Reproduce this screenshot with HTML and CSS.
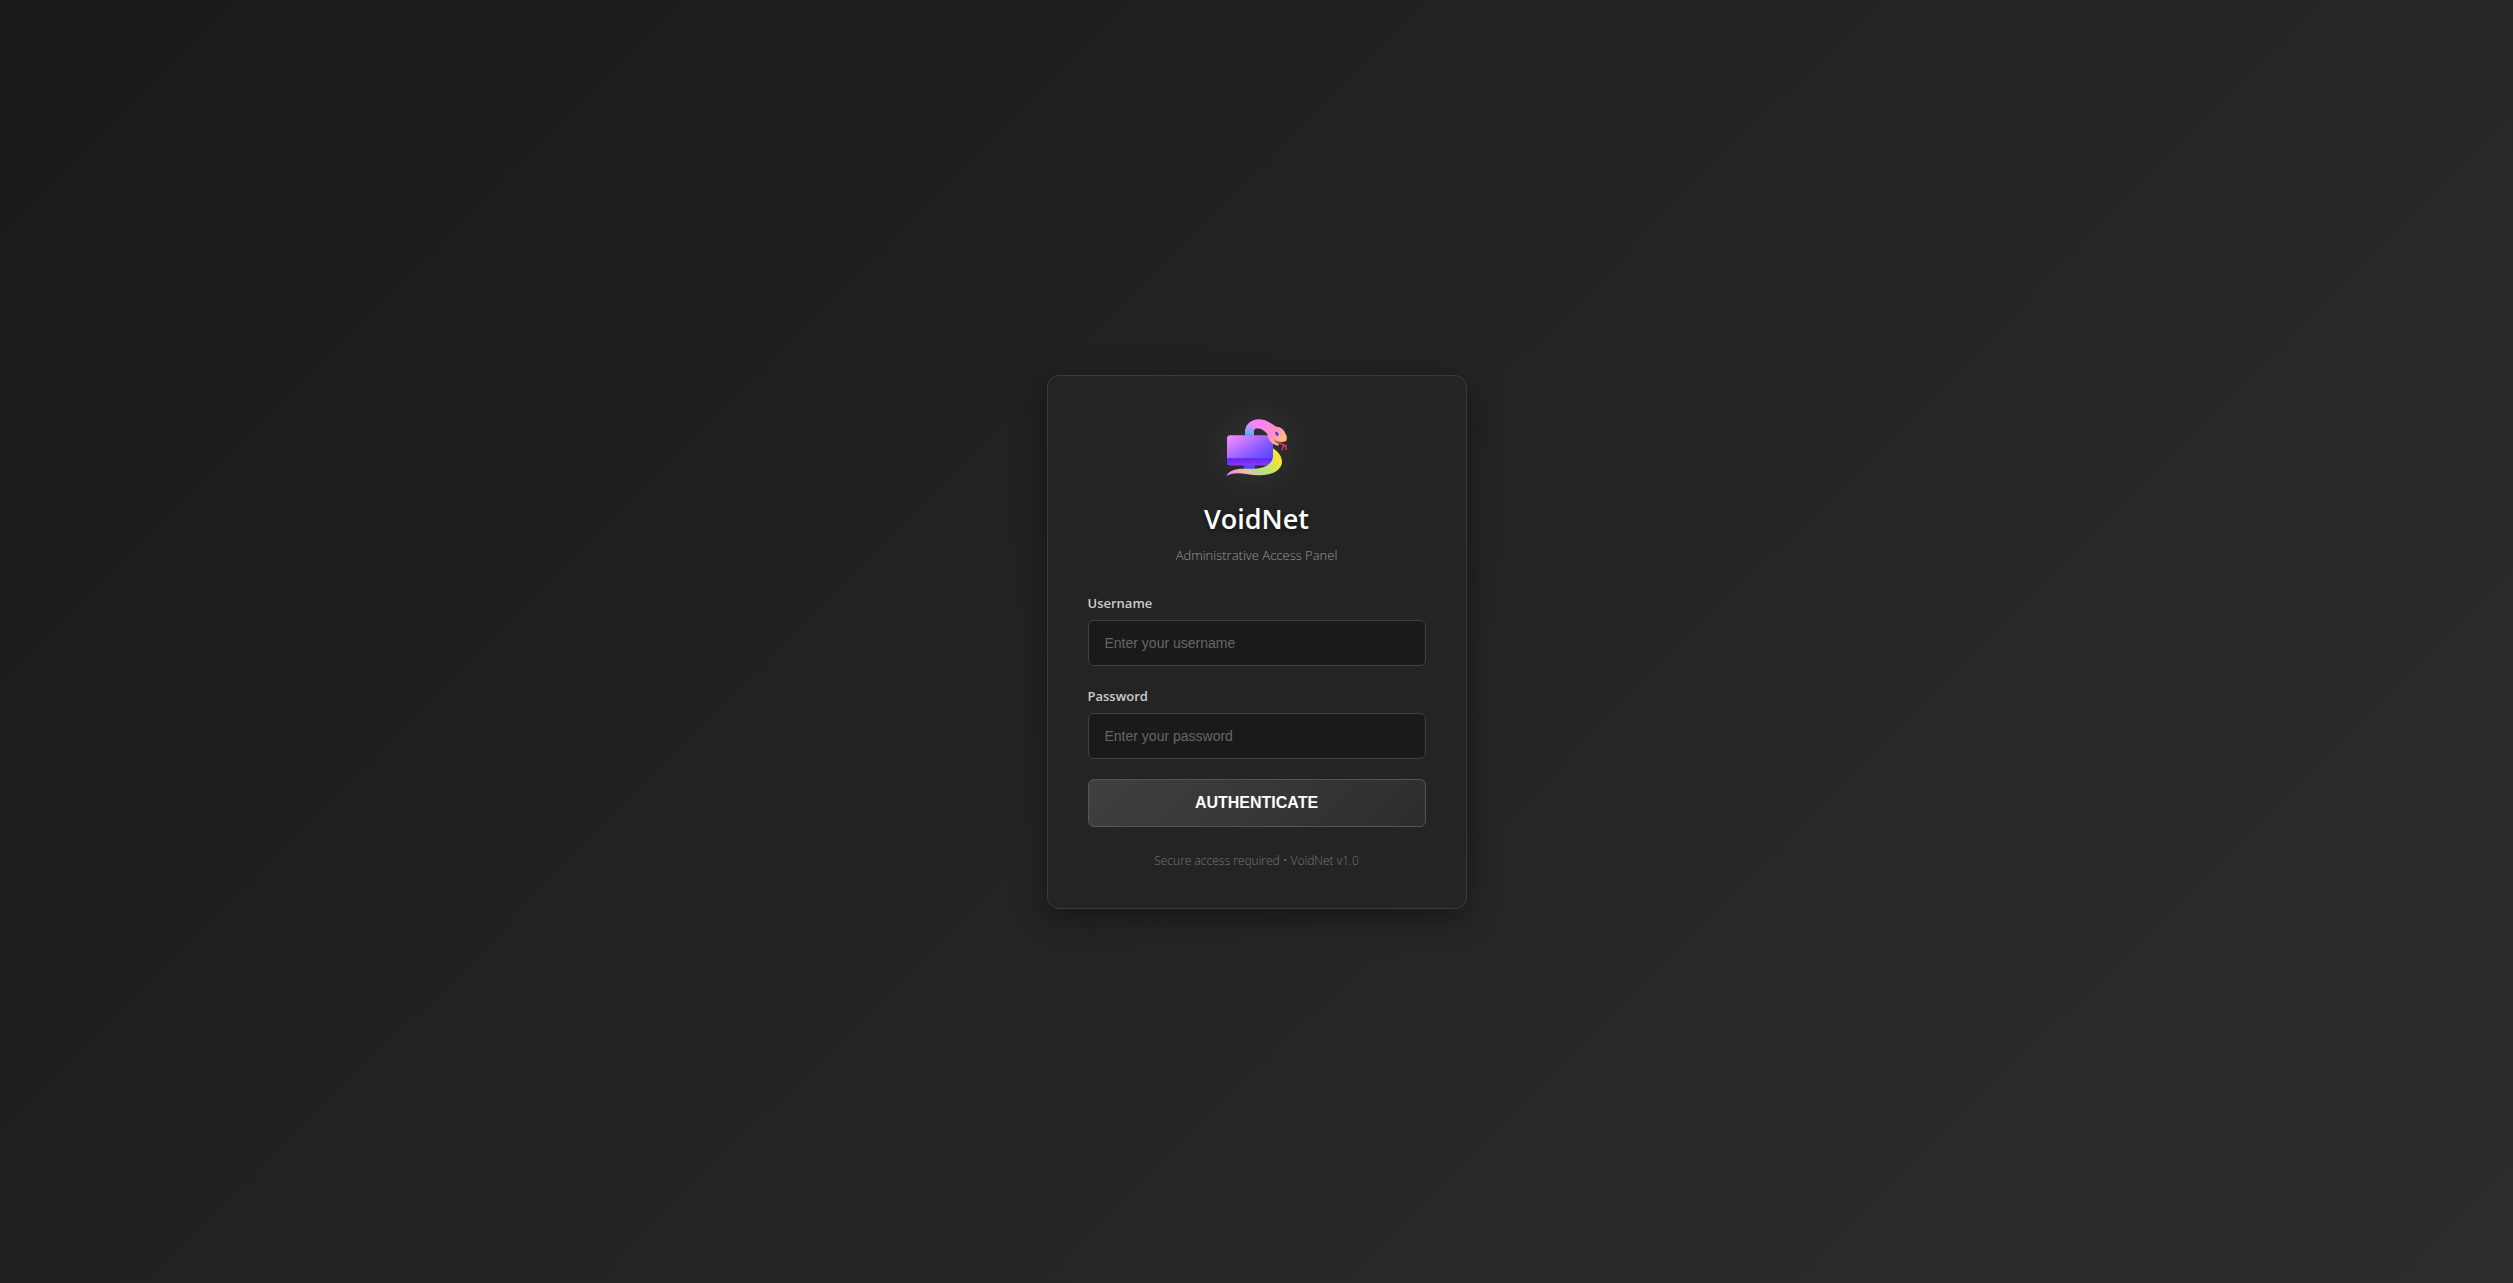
FILE: index.html
```html
<!DOCTYPE html>
<html lang="en">
<head>
<meta charset="utf-8">
<meta name="viewport" content="width=device-width, initial-scale=1">
<title>VoidNet</title>
<link rel="stylesheet" href="styles.css">
</head>
<body>
<main class="card">
  <header class="header">
    <svg class="logo" viewBox="30 18 192 192" aria-hidden="true">
      <defs>
        <linearGradient id="screen" x1="0" y1="0" x2="1" y2="1">
          <stop offset="0" stop-color="#fd90ff"/>
          <stop offset=".55" stop-color="#8a5cff"/>
          <stop offset=".9" stop-color="#4f42ff"/>
        </linearGradient>
        <linearGradient id="base" x1="0" y1="0" x2="0" y2="1">
          <stop offset="0" stop-color="#5a26f5"/>
          <stop offset="1" stop-color="#9535f5"/>
        </linearGradient>
        <linearGradient id="head" gradientUnits="userSpaceOnUse" x1="130" y1="40" x2="208" y2="98">
          <stop offset="0" stop-color="#fd82fb"/>
          <stop offset=".55" stop-color="#ff8fc4"/>
          <stop offset="1" stop-color="#ffc86e"/>
        </linearGradient>
        <radialGradient id="neck" gradientUnits="userSpaceOnUse" cx="100" cy="82" r="50">
          <stop offset="0" stop-color="#38b6ff"/>
          <stop offset=".25" stop-color="#58b0ff"/>
          <stop offset=".65" stop-color="#b898fc" stop-opacity=".8"/>
          <stop offset="1" stop-color="#fd82fb" stop-opacity="0"/>
        </radialGradient>
        <linearGradient id="tail" gradientUnits="userSpaceOnUse" x1="34" y1="196" x2="190" y2="130">
          <stop offset="0" stop-color="#ff78f2"/>
          <stop offset=".32" stop-color="#e8bfa8"/>
          <stop offset=".65" stop-color="#b2e386"/>
          <stop offset="1" stop-color="#ffe32e"/>
        </linearGradient>
      </defs>
      <path fill="#494bf0" d="M86 164h34v14H86z"/>
      <rect x="36" y="76" width="138" height="90" rx="10" fill="url(#screen)"/>
      <path fill="url(#base)" d="M36 145h138v11a10 10 0 0 1-10 10H46a10 10 0 0 1-10-10z"/>
      <path fill="url(#tail)" d="M174 115c18 11 27 27 27 42-1 24-31 40-70 39-36 0-66-16-97 2 8-17 28-23 55-22 26 1 49 1 66-9 12-7 19-15 19-31z"/>
      <path fill="url(#head)" d="M91 76c-5-28 15-48 40-48 25 0 37 14 53 22 20 1 26 16 31 29q1 8-1 13c-8 5-20 5-32 1 4 5 13 10 8 14-17-3-31-14-33-35-8-9-20-18-31-17-10 1-11 11-9 21z"/>
      <path fill="url(#neck)" d="M91 76c-5-28 15-48 40-48 8 0 15 2 21 4l5 40c-8-9-20-18-31-17-10 1-11 11-9 21z"/>
      <path fill="#713061" d="M176 88c9 9 19 9 27 9l-9 6c-7-3-14-7-18-15z"/>
      <path fill="none" stroke="#f03870" stroke-width="4" stroke-linecap="round" stroke-linejoin="round" d="M184 95c8 5 14 5 20 10 3 4-1 9-3 14M204 105c6-1 9 3 10 13M204 105q5 2 9 1"/>
      <path fill="#5b3be8" d="M180 68c2-6 11-1 11 6-4 9-9 2-11-6z"/>
    </svg>
    <h1 class="title">VoidNet</h1>
    <p class="subtitle">Administrative Access Panel</p>
  </header>
  <form class="form">
    <div class="field">
      <label class="label" for="username">Username</label>
      <input class="input" type="text" id="username" placeholder="Enter your username">
    </div>
    <div class="field">
      <label class="label" for="password">Password</label>
      <input class="input" type="password" id="password" placeholder="Enter your password">
    </div>
    <button class="button" type="submit">AUTHENTICATE</button>
  </form>
  <footer class="footer">Secure access required • VoidNet v1.0</footer>
</main>
</body>
</html>
```
FILE: styles.css
```css
* {
  box-sizing: border-box;
  margin: 0;
}

body {
  min-height: 100vh;
  display: flex;
  align-items: center;
  justify-content: center;
  background: linear-gradient(135deg, #1a1a1a 0%, #2d2d2d 100%);
  font-family: "Open Sans", "Noto Sans", sans-serif;
}

.card {
  width: 100%;
  max-width: 420px;
  padding: 40px;
  background: #242424;
  border: 1px solid #3a3a3a;
  border-radius: 12px;
  box-shadow: 0 8px 32px rgba(0, 0, 0, 0.4);
}

.header {
  display: flex;
  flex-direction: column;
  align-items: center;
  margin-bottom: 28px;
}

.logo {
  width: 64px;
  height: 64px;
  margin-bottom: 20px;
  filter: drop-shadow(0 0 20px rgba(255, 255, 255, 0.1));
}

.title {
  margin-bottom: 8px;
  color: #fff;
  font-size: 27px;
  font-weight: 600;
  line-height: 38px;
  text-shadow: 0 2px 4px rgba(0, 0, 0, 0.5);
}

.subtitle {
  color: #999;
  font-size: 13px;
  font-weight: 300;
  line-height: 19px;
}

.form {
  display: grid;
  gap: 20px;
}

.field {
  display: grid;
  gap: 6px;
}

.label {
  color: #ccc;
  font-size: 13px;
  font-weight: 600;
  line-height: 21px;
}

.input {
  width: 100%;
  height: 46px;
  padding: 0 16px;
  color: #fff;
  background: #1a1a1a;
  border: 1px solid #404040;
  border-radius: 6px;
  font-family: "Liberation Sans", Arial, sans-serif;
  font-size: 14px;
}

.input::placeholder {
  color: #666;
}

.button {
  height: 48px;
  color: #fff;
  background: linear-gradient(135deg, #404040, #2d2d2d);
  border: 1px solid #555;
  border-radius: 6px;
  font-family: "Liberation Sans", Arial, sans-serif;
  font-size: 16px;
  font-weight: 600;
}

.footer {
  margin-top: 26px;
  color: #777;
  font-size: 12px;
  font-weight: 300;
  line-height: 15px;
  text-align: center;
}
```
